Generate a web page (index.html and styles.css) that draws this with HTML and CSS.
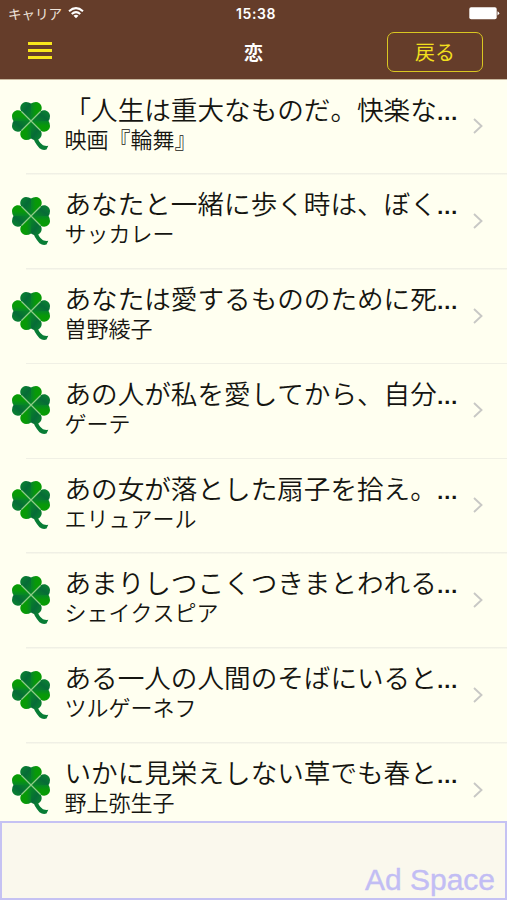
FILE: index.html
```html
<!DOCTYPE html>
<html lang="ja">
<head>
<meta charset="utf-8">
<title>恋</title>
<link rel="stylesheet" href="styles.css">
</head>
<body>
<svg class="defs" width="0" height="0" aria-hidden="true">
  <defs>
    <linearGradient id="dark" gradientUnits="userSpaceOnUse" x1="-10" y1="-16" x2="1" y2="-8"><stop offset="0" stop-color="#0a8132"/><stop offset=".5" stop-color="#066b37"/><stop offset="1" stop-color="#07802a"/></linearGradient>
    <linearGradient id="light" gradientUnits="userSpaceOnUse" x1="0" y1="-12" x2="9" y2="-12"><stop offset="0" stop-color="#06852a"/><stop offset=".5" stop-color="#08980a"/><stop offset="1" stop-color="#089b05"/></linearGradient>
    <g id="leaf">
      <path d="M0 0L-9.500 -9.500C-12.500 -13.500 -9.500 -19 -5 -19Q-2 -19 0 -17.500H.3V0Z" fill="url(#dark)"/>
      <path d="M0 0L9.500 -9.500C12.500 -13.500 9.500 -19 5 -19Q2 -19 0 -17.500Z" fill="url(#light)"/>
    </g>
    <symbol id="clover" viewBox="0 0 40 50">
      <path d="M20 30L26 34Q27 41 32 44.300Q35 45.200 37.300 44.800L35.500 48.600Q32 50 28.500 47.300Q23 41 21 34Z" fill="#087d35"/>
      <g transform="translate(20 20)">
        <use href="#leaf"/>
        <use href="#leaf" transform="rotate(90)"/>
        <use href="#leaf" transform="rotate(180)"/>
        <use href="#leaf" transform="rotate(270)"/>
        <path d="M-9.500 -9.500L9.500 9.500M9.500 -9.500L-9.500 9.500" stroke="#8ecc88" stroke-width="1.200"/>
      </g>
    </symbol>
    <symbol id="chevron" viewBox="0 0 10 16"><path d="M1 1L8.500 8L1 15" fill="none" stroke="#c8c8c5" stroke-width="1.900"/></symbol>
  </defs>
</svg>
<div class="screen">
  <header class="header">
    <div class="status">
      <div class="carrier"><span>キャリア</span>
        <svg width="16" height="12" viewBox="0 0 16 12" fill="none" stroke="#fff" stroke-width="2"><path d="M1 4.300Q8 -2 15 4.300M3.700 7Q8 3.200 12.300 7"/><path d="M5.500 8.700Q8 6.800 10.500 8.700L8 11.300Z" fill="#fff" stroke="none"/></svg>
      </div>
      <div class="clock">15:38</div>
      <svg class="battery" width="31" height="13" viewBox="0 0 31 13"><rect x=".3" y=".3" width="27.400" height="12" rx="1.800" fill="#fff"/><path d="M28.500 4.200Q32 6.200 28.500 8.400Z" fill="#fff"/></svg>
    </div>
    <nav class="nav">
      <div class="menu"><i></i><i></i><i></i></div>
      <h1>恋</h1>
      <button class="back">戻る</button>
    </nav>
  </header>
  <main class="list">
    <article class="row"><svg class="clover"><use href="#clover"/></svg><div class="text"><p class="quote">「人生は重大なものだ。快楽な<span>…</span></p><p class="author">映画『輪舞』</p></div><svg class="chevron"><use href="#chevron"/></svg></article>
    <article class="row"><svg class="clover"><use href="#clover"/></svg><div class="text"><p class="quote">あなたと一緒に歩く時は、ぼく<span>…</span></p><p class="author">サッカレー</p></div><svg class="chevron"><use href="#chevron"/></svg></article>
    <article class="row"><svg class="clover"><use href="#clover"/></svg><div class="text"><p class="quote">あなたは愛するもののために死<span>…</span></p><p class="author">曽野綾子</p></div><svg class="chevron"><use href="#chevron"/></svg></article>
    <article class="row"><svg class="clover"><use href="#clover"/></svg><div class="text"><p class="quote">あの人が私を愛してから、自分<span>…</span></p><p class="author">ゲーテ</p></div><svg class="chevron"><use href="#chevron"/></svg></article>
    <article class="row"><svg class="clover"><use href="#clover"/></svg><div class="text"><p class="quote">あの女が落とした扇子を拾え。<span>…</span></p><p class="author">エリュアール</p></div><svg class="chevron"><use href="#chevron"/></svg></article>
    <article class="row"><svg class="clover"><use href="#clover"/></svg><div class="text"><p class="quote">あまりしつこくつきまとわれる<span>…</span></p><p class="author">シェイクスピア</p></div><svg class="chevron"><use href="#chevron"/></svg></article>
    <article class="row"><svg class="clover"><use href="#clover"/></svg><div class="text"><p class="quote">ある一人の人間のそばにいると<span>…</span></p><p class="author">ツルゲーネフ</p></div><svg class="chevron"><use href="#chevron"/></svg></article>
    <article class="row"><svg class="clover"><use href="#clover"/></svg><div class="text"><p class="quote">いかに見栄えしない草でも春と<span>…</span></p><p class="author">野上弥生子</p></div><svg class="chevron"><use href="#chevron"/></svg></article>
  </main>
  <footer class="ad">Ad Space</footer>
</div>
</body>
</html>
```

FILE: styles.css
```css
* { box-sizing: border-box; }
body, h1, p { margin: 0; }
body { background: #fffff0; color: #151510; font-family: "Noto Sans CJK JP", sans-serif; font-kerning: none; }
.defs { display: block; }
.screen { width: 507px; height: 900px; display: flex; flex-direction: column; overflow: hidden; }
.header { flex: none; height: 79px; background: #653d2a; color: #fff; }
.status { display: grid; grid-template-columns: 1fr auto 1fr; height: 27px; padding: 0 7px 0 8px; align-items: center; }
.carrier { display: flex; align-items: center; gap: 6px; font-size: 13.500px; line-height: 27px; color: #eee3da; }
.carrier svg { margin-top: -2px; }
.clock { font: 600 14px/27px Inter, sans-serif; letter-spacing: .6px; margin-left: 4px; }
.battery { justify-self: end; }
.nav { display: grid; grid-template-columns: 1fr auto 1fr; height: 51px; padding: 0 24px 0 28px; align-items: center; }
.menu { width: 24px; display: flex; flex-direction: column; gap: 4px; margin-top: -4px; }
.menu i { height: 2.700px; background: #f8e71c; }
h1 { font-size: 19px; line-height: 30px; font-weight: 700; margin: -1px 4px 0 0; }
.back { justify-self: end; width: 96px; height: 40px; margin-top: -1px; padding: 0 0 1px; border: 1.500px solid #d9c721; border-radius: 7px; background: transparent; color: #f1df1d; font: 400 20px/30px "Noto Sans CJK JP", sans-serif; }
.list { flex: none; height: 742px; overflow: hidden; border-top: 1px solid #c9b99f; }
.row { height: 94.800px; display: flex; align-items: flex-start; padding: 0 24px 0 11px; background: linear-gradient(#f0f0e5, #f0f0e5) 26px 100% / 100% 1.500px no-repeat; }
.clover { flex: none; width: 40px; height: 50px; margin-top: 21px; }
.text { flex: 1; margin-left: 13.500px; padding-top: 10.500px; white-space: nowrap; font-weight: 350; }
.quote { font-size: 26.600px; line-height: 36px; }
.quote span { font: 700 22px/1 "Liberation Sans", sans-serif; margin-left: -.5px; }
.author { font-size: 22px; line-height: 26px; margin-top: -2px; }
.chevron { flex: none; width: 10px; height: 16px; margin-top: 38px; }
.ad { flex: none; height: 79px; border: 2px solid #c5c2f3; background: #faf8ed; color: #c2bdf4; font: 30px/36px "Liberation Sans", sans-serif; display: flex; align-items: flex-end; justify-content: flex-end; padding: 0 10px 0 0; -webkit-text-stroke: .4px #c2bdf4; }
```
